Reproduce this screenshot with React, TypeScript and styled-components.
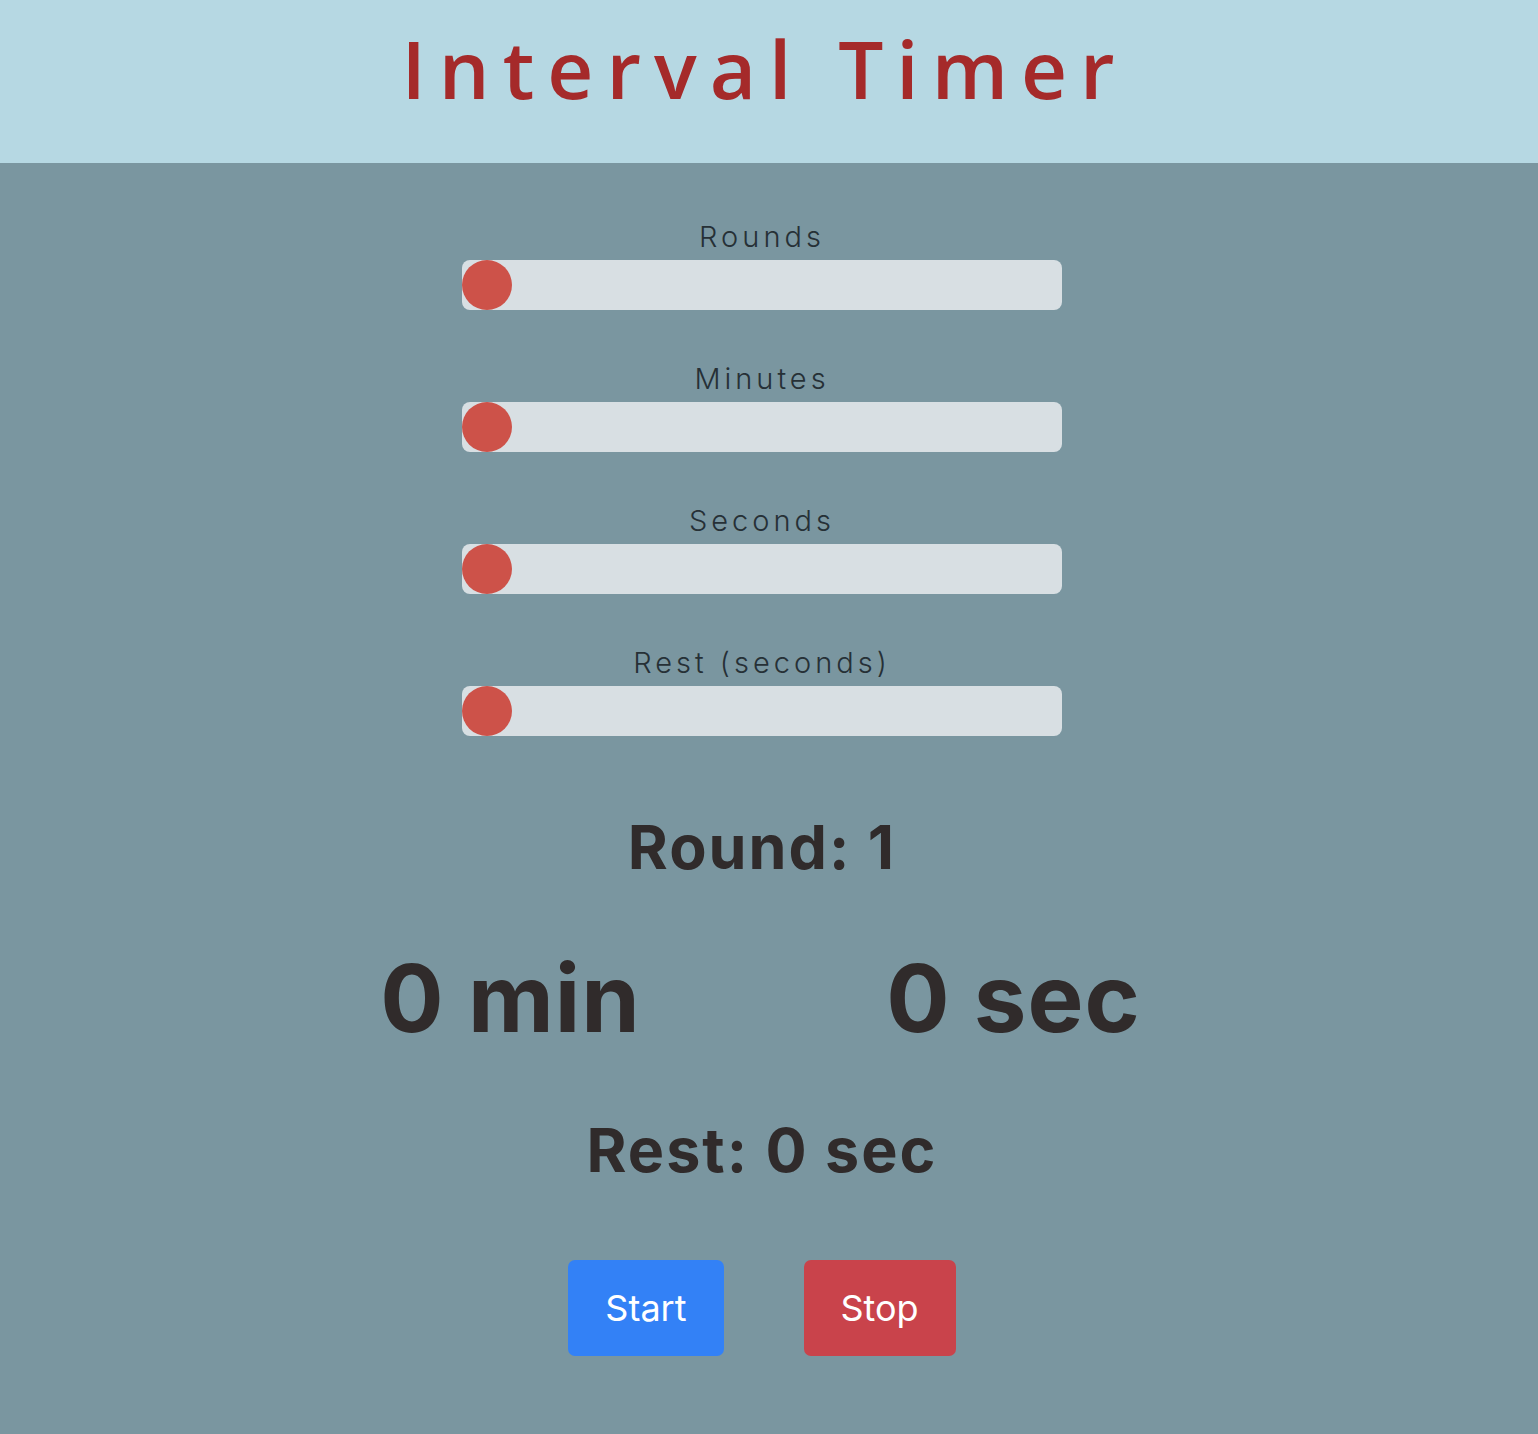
import React, { useState } from "react";
import styled, { createGlobalStyle } from "styled-components";

const GlobalStyle = createGlobalStyle`
  html, body {
    margin: 0;
    padding: 0;
    background: #7a96a0;
  }
  body {
    font-family: Inter, "Noto Sans", sans-serif;
  }
  * { box-sizing: border-box; }
`;

const Page = styled.div`
  min-height: 100vh;
  display: flex;
  flex-direction: column;
  background: #7a96a0;
`;

const Header = styled.header`
  height: 163px;
  background: #b6d8e3;
  display: flex;
  justify-content: center;
  padding-right: 9px;
`;

const Title = styled.h1`
  margin: 18px 0 0;
  font-family: "Open Sans", "DejaVu Sans", sans-serif;
  font-weight: 600;
  font-size: 80px;
  line-height: 100px;
  letter-spacing: 13px;
  color: #a52a2a;
`;

const Main = styled.main`
  flex: 1;
  display: flex;
  flex-direction: column;
  align-items: center;
  padding: 56px 14px 40px 0;
`;

const Controls = styled.div`
  display: flex;
  flex-direction: column;
  gap: 51px;
  width: 600px;
`;

const Field = styled.label`
  display: flex;
  flex-direction: column;
  align-items: center;
  gap: 5px;
`;

const FieldLabel = styled.span`
  font-family: Inter, sans-serif;
  font-weight: 300;
  font-size: 29px;
  line-height: 36px;
  letter-spacing: 4px;
  color: #263036;
`;

const Range = styled.input`
  -webkit-appearance: none;
  appearance: none;
  width: 600px;
  height: 50px;
  margin: 0;
  background: #d8dfe3;
  border-radius: 8px;
  outline: none;
  cursor: pointer;

  &::-webkit-slider-thumb {
    -webkit-appearance: none;
    appearance: none;
    width: 50px;
    height: 50px;
    border-radius: 50%;
    background: #cd5249;
    border: none;
  }
  &::-moz-range-thumb {
    width: 50px;
    height: 50px;
    border-radius: 50%;
    background: #cd5249;
    border: none;
  }
`;

const Status = styled.div<{ $top: number }>`
  margin-top: ${(p) => p.$top}px;
  font-family: Inter, sans-serif;
  font-weight: 700;
  font-size: 61px;
  line-height: 72px;
  letter-spacing: 2px;
  color: #302b2b;
  text-align: center;
`;

const TimeRow = styled.div`
  margin-top: 59px;
  display: grid;
  grid-template-columns: 503px 503px;
`;

const TimeValue = styled.div`
  font-family: Inter, sans-serif;
  font-weight: 700;
  font-size: 94px;
  line-height: 112px;
  letter-spacing: 1px;
  color: #302b2b;
  text-align: center;
`;

const ButtonRow = styled.div`
  margin-top: 74px;
  display: flex;
  gap: 80px;
`;

const Button = styled.button<{ $variant: "start" | "stop" }>`
  height: 96px;
  padding: 0 37px;
  border: none;
  border-radius: 7px;
  font-family: Inter, sans-serif;
  font-weight: 400;
  font-size: 36px;
  color: #ffffff;
  background: ${(p) => (p.$variant === "start" ? "#3381f6" : "#c9434b")};
  cursor: pointer;
`;

const fields = ["Rounds", "Minutes", "Seconds", "Rest (seconds)"];

export default function App() {
  const [values, setValues] = useState<number[]>([0, 0, 0, 0]);
  return (
    <>
      <GlobalStyle />
      <Page>
        <Header>
          <Title>Interval Timer</Title>
        </Header>
        <Main>
          <Controls>
            {fields.map((f, i) => (
              <Field key={f}>
                <FieldLabel>{f}</FieldLabel>
                <Range
                  type="range"
                  min={0}
                  max={60}
                  value={values[i]}
                  onChange={(e) => {
                    const next = [...values];
                    next[i] = Number(e.target.value);
                    setValues(next);
                  }}
                />
              </Field>
            ))}
          </Controls>
          <Status $top={75}>Round: 1</Status>
          <TimeRow>
            <TimeValue>0 min</TimeValue>
            <TimeValue>0 sec</TimeValue>
          </TimeRow>
          <Status $top={60}>Rest: 0 sec</Status>
          <ButtonRow>
            <Button $variant="start">Start</Button>
            <Button $variant="stop">Stop</Button>
          </ButtonRow>
        </Main>
      </Page>
    </>
  );
}
